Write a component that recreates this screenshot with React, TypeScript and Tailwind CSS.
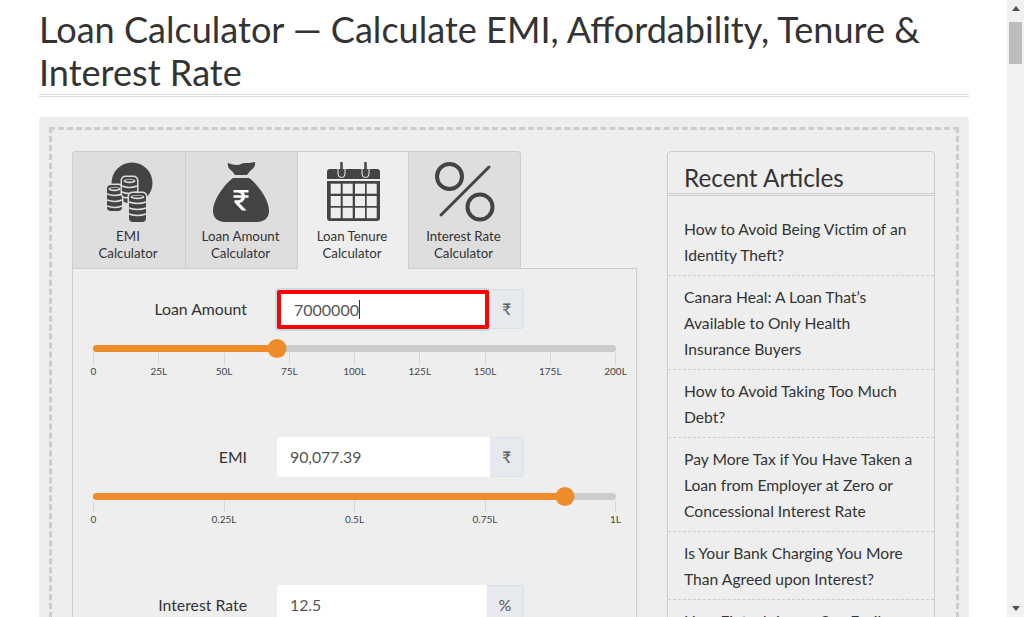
import React from 'react';

const dark = '#444444';

// one stack of coins in the EMI icon
const CoinStack = ({ x, y, w, h }: { x: number; y: number; w: number; h: number }) => {
  const stripes: number[] = [];
  for (let s = y + 9; s < y + h - 2; s += 6) stripes.push(s);
  return (
    <g>
      <rect x={x - 1.5} y={y - 1.5} width={w + 3} height={h + 3} rx="5" fill="#dedede" />
      <rect x={x} y={y} width={w} height={h} rx="4" fill={dark} />
      <ellipse cx={x + w / 2} cy={y + 4} rx={w / 2 - 1.5} ry="2.200" fill="#dedede" />
      <ellipse cx={x + w / 2} cy={y + 3.500} rx={w / 2 - 3.5} ry="1.100" fill={dark} />
      {stripes.map((s) => (
        <path key={s} d={`M${x} ${s}q${w / 2} 3 ${w} 0`} stroke="#dedede" strokeWidth="1.600" fill="none" />
      ))}
    </g>
  );
};

const EmiIcon = () => (
  <svg className="ml-[2px]" width="46" height="60" viewBox="0 0 46 60">
    <circle cx="25" cy="21" r="20.500" fill={dark} />
    <CoinStack x={0} y={23} w={15} h={26} />
    <CoinStack x={15} y={15} w={15} h={20} />
    <CoinStack x={22} y={31} w={17} h={29} />
  </svg>
);

const BagIcon = () => (
  <svg className="-ml-px" width="56" height="60" viewBox="0 0 56 60">
    <path d="M15 1c3 1 6 2 9 2s5-2 8-2 6 0 10-1c1 4-2 7-5 9-1 1-2 3-3 4H22c-1-1-2-3-3-4-3-2-5-5-4-8z" fill={dark} />
    <path d="M20 16h16c6 4 20 20 20 33 0 7-5 11-12 11H12C5 60 0 56 0 49c0-13 14-29 20-33z" fill={dark} />
    <path d="M20.500 28h15v2.500h-5c.8.8 1.300 1.700 1.500 2.700h3.500v2.500H32c-.6 3-2.800 4.800-5.800 5.300l7.300 7.500H29l-7.500-8v-2.200H24c2.500 0 4-.9 4.500-2.600h-8v-2.500h8.300c-.6-1.700-2-2.700-4.300-2.700h-4z" fill="#ffffff" />
  </svg>
);

const CalendarIcon = () => (
  <svg width="53" height="60" viewBox="0 0 53 60">
    <path d="M3 7h47a3 3 0 0 1 3 3v7H0v-7a3 3 0 0 1 3-3z" fill={dark} />
    <path d="M14.500 1v11M38.500 1v11" stroke={dark} strokeWidth="2.500" strokeLinecap="round" />
    <path d="M11 7v5a3.500 3.500 0 0 0 7 0V7M35 7v5a3.500 3.500 0 0 0 7 0V7" stroke="#eeeeee" strokeWidth="1" fill="none" />
    <path d="M0 19h53v37a3 3 0 0 1-3 3H3a3 3 0 0 1-3-3z" fill={dark} />
    <g fill="#eeeeee">
      {[3.700, 15.700, 28, 39.700].map((x) =>
        [21.700, 34, 45.700].map((y) => <rect key={`${x}-${y}`} x={x} y={y} width="10" height={y > 40 ? 10.500 : 10} />),
      )}
    </g>
  </svg>
);

const PercentIcon = () => (
  <svg width="60" height="60" viewBox="0 0 60 60">
    <circle cx="14.500" cy="14.500" r="12.500" fill="none" stroke={dark} strokeWidth="4" />
    <circle cx="45" cy="45" r="12.500" fill="none" stroke={dark} strokeWidth="4" />
    <path d="M54 5 6 53" stroke={dark} strokeWidth="3" strokeLinecap="round" />
  </svg>
);

const tabs = [
  { icon: <EmiIcon />, lines: ['EMI', 'Calculator'], width: 'w-[113px]' },
  { icon: <BagIcon />, lines: ['Loan Amount', 'Calculator'], width: 'w-[112px]' },
  { icon: <CalendarIcon />, lines: ['Loan Tenure', 'Calculator'], width: 'w-[112px]', active: true },
  { icon: <PercentIcon />, lines: ['Interest Rate', 'Calculator'], width: 'w-[112px]' },
];

const articles = [
  ['How to Avoid Being Victim of an', 'Identity Theft?'],
  ['Canara Heal: A Loan That\u2019s', 'Available to Only Health', 'Insurance Buyers'],
  ['How to Avoid Taking Too Much', 'Debt?'],
  ['Pay More Tax if You Have Taken a', 'Loan from Employer at Zero or', 'Concessional Interest Rate'],
  ['Is Your Bank Charging You More', 'Than Agreed upon Interest?'],
  ['How Fintech Loans Can Easily', 'Trap You'],
];

function Slider({ fill, labels }: { fill: number; labels: string[] }) {
  return (
    <div className="ml-[20px] w-[523px]">
      <div className="relative h-[7px] rounded-full bg-[#cccccc]">
        <div className="h-full rounded-full bg-[#ee8c2c]" style={{ width: `${fill}px` }} />
        <div
          className="absolute top-[-6px] h-[19px] w-[19px] -translate-x-1/2 rounded-full bg-[#ee8c2c]"
          style={{ left: `${fill}px` }}
        />
      </div>
      <div className="mt-px flex justify-between">
        {labels.map((label) => (
          <div key={label} className="flex w-px flex-col items-center">
            <div className="h-[11px] w-px bg-[#d4d4d4]" />
            <span className="text-[10px] leading-[14px] whitespace-nowrap text-[#444444]">{label}</span>
          </div>
        ))}
      </div>
    </div>
  );
}

function Field({ label, value, unit, focused }: { label: string; value: string; unit: string; focused?: boolean }) {
  return (
    <div className="flex h-10 items-center">
      <div className="w-[174px] text-right text-[15.800px] text-[#333333]">{label}</div>
      <div className="ml-[30px] flex h-10 w-[247px]">
        {focused ? (
          <div className="mt-px mr-px flex h-[39px] w-[212px] items-center rounded-[2px] border-4 border-[#ff0000] bg-white pl-[13px] text-base text-[#555555] shadow-[0_0_0_2px_#c5dbe6]">
            {value}
            <span className="h-[19px] w-px bg-[#333333]" />
          </div>
        ) : (
          <div
            className={`flex h-10 items-center rounded-l bg-white pl-[13px] text-[15.800px] text-[#555555] ${
              unit === '%' ? 'w-[210px]' : 'w-[213px]'
            }`}
          >
            {value}
          </div>
        )}
        <div className="flex flex-1 items-center justify-center rounded-r border border-l-0 border-[#d8dfe5] bg-[#e6eaee] text-base text-[#555555]">
          {unit}
        </div>
      </div>
    </div>
  );
}

export default function App() {
  return (
    <div className="flex h-screen overflow-hidden bg-white font-['Lato','Liberation_Sans',sans-serif] text-[#333333]">
      <main className="h-full min-w-0 flex-1 overflow-hidden px-[39px]">
        <div className="w-[930px]">
          <h1 className="border-b-[3px] border-double border-[#dddddd] pt-[8px] text-[36.100px] leading-[43px] font-normal text-[#333333]">
            Loan Calculator — Calculate EMI, Affordability, Tenure &amp; Interest Rate
          </h1>
          <div className="mt-[20px] rounded-[3px] bg-[#eeeeee] p-[10px]">
            <div className="flex items-start gap-[30px] border-[3px] border-dashed border-[#cccccc] px-[20px] pt-[21px]">
              <section className="w-[565px] shrink-0">
                <div className="flex h-[118px] w-[449px]">
                  {tabs.map((tab, i) => (
                    <div
                      key={tab.lines[0]}
                      className={`flex h-[118px] flex-col items-center border-t border-[#cccccc] pt-[10px] text-[13.300px] leading-[17px] ${tab.width} ${
                        tab.active ? 'bg-[#eeeeee]' : 'border-b bg-[#dedede]'
                      } ${i === 0 ? 'rounded-tl border-l' : ''} ${i === 3 ? 'rounded-tr border-r' : ''} ${
                        i === 1 ? 'border-l' : ''
                      } ${tab.active ? 'border-x' : ''}`}
                    >
                      <div className="flex h-[60px] items-center justify-center">{tab.icon}</div>
                      <div className="mt-[6px] mr-[2px] text-center text-[#333333]">
                        {tab.lines.map((line) => (
                          <div key={line}>{line}</div>
                        ))}
                      </div>
                    </div>
                  ))}
                </div>
                <div className="-mt-px h-[400px] border-x border-t border-[#cccccc] pt-[20px]">
                  <div className="h-[148px]">
                    <Field label="Loan Amount" value="7000000" unit="₹" focused />
                    <div className="mt-[16px]">
                      <Slider fill={184} labels={['0', '25L', '50L', '75L', '100L', '125L', '150L', '175L', '200L']} />
                    </div>
                  </div>
                  <div className="h-[148px]">
                    <Field label="EMI" value="90,077.39" unit="₹" />
                    <div className="mt-[16px]">
                      <Slider fill={472} labels={['0', '0.25L', '0.5L', '0.75L', '1L']} />
                    </div>
                  </div>
                  <Field label="Interest Rate" value="12.5" unit="%" />
                </div>
              </section>
              <aside className="w-[268px] shrink-0 rounded-t border border-[#cccccc]">
                <h2 className="border-b-[3px] border-double border-[#cccccc] px-4 pt-[11px] text-[24.300px] leading-[30px] font-normal text-[#333333]">
                  Recent Articles
                </h2>
                <ul className="pt-[12px] text-[15.650px] leading-[26px] text-[#333333]">
                  {articles.map((lines) => (
                    <li key={lines[0]} className="border-b border-dashed border-[#cccccc] px-4 pt-[8px] pb-[7px]">
                      {lines.map((line) => (
                        <div key={line} className="whitespace-nowrap">
                          {line}
                        </div>
                      ))}
                    </li>
                  ))}
                </ul>
              </aside>
            </div>
          </div>
        </div>
      </main>
      <div className="flex w-[17px] shrink-0 flex-col items-center bg-[#f1f1f1]">
        <div className="mt-[6px] h-0 w-0 border-x-[4px] border-b-[5px] border-x-transparent border-b-[#505050]" />
        <div className="mt-[11px] h-[42px] w-[13px] bg-[#bcbcbc]" />
        <div className="mt-auto mb-[6px] h-0 w-0 border-x-[4px] border-t-[5px] border-x-transparent border-t-[#505050]" />
      </div>
    </div>
  );
}
